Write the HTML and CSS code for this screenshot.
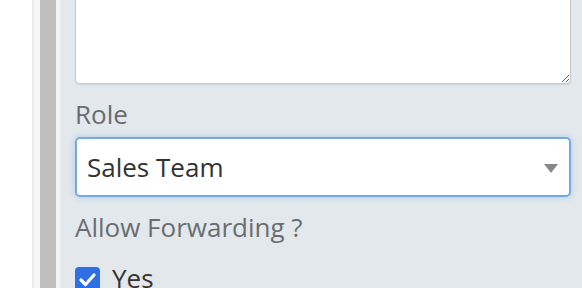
FILE: index.html
```html
<!DOCTYPE html>
<html>
<head>
<meta charset="utf-8">
<link rel="stylesheet" href="styles.css">
</head>
<body>
<div class="page">
  <div class="gutter"></div>
  <div class="rail">
    <div class="rail-edge"></div>
    <div class="rail-light"></div>
    <div class="rail-bar"></div>
    <div class="rail-light2"></div>
    <div class="rail-edge2"></div>
  </div>
  <div class="panel">
    <textarea class="notes"></textarea>
    <label class="label role-label">Role</label>
    <div class="select">
      <span class="select-text">Sales Team</span>
      <span class="caret"></span>
    </div>
    <div class="label fwd-label">Allow Forwarding ?</div>
    <div class="check-row">
      <span class="checkbox">
        <svg width="25" height="25" viewBox="0 0 25 25"><path d="M6 13 L10.5 17.5 L19 8" fill="none" stroke="#fff" stroke-width="3.2" stroke-linecap="round" stroke-linejoin="round"/></svg>
      </span>
      <span class="check-text">Yes</span>
    </div>
  </div>
</div>
</body>
</html>
```

FILE: styles.css
```css
html, body {
  margin: 0;
  padding: 0;
  height: 100%;
  overflow: hidden;
  background: #ffffff;
  font-family: "Open Sans", "Liberation Sans", sans-serif;
}
.page {
  display: flex;
  height: 288px;
}
.gutter {
  width: 32px;
  background: #ffffff;
}
.rail {
  display: flex;
}
.rail-edge { width: 2px; background: #ececec; }
.rail-light { width: 6px; background: #f7f7f7; }
.rail-bar { width: 16px; background: #bfbfbf; }
.rail-light2 { width: 4px; background: #f4f4f4; }
.rail-edge2 { width: 2px; background: #ebebeb; }
.panel {
  flex: 1;
  background: #e3e8ec;
  padding: 0 11px 0 13px;
  display: flex;
  flex-direction: column;
}
.panel > * {
  flex-shrink: 0;
}
.notes {
  display: block;
  box-sizing: border-box;
  margin: -20px 0 0 0;
  height: 104px;
  width: 100%;
  border: 1px solid #c6c8ca;
  border-radius: 4px;
  background: #fff;
  box-shadow: 0 1px 1px rgba(0,0,0,0.08);
  resize: vertical;
  font: inherit;
}
.label {
  display: block;
  color: #6a6d70;
  font-size: 26px;
  line-height: 30px;
}
.role-label {
  margin-top: 15px;
}
.select {
  margin-top: 8px;
  box-sizing: border-box;
  height: 60px;
  border: 2px solid #74a9e6;
  border-radius: 5px;
  background: #fff;
  box-shadow: 0 0 6px rgba(102,160,230,0.45);
  display: flex;
  align-items: center;
  padding: 0 11px 0 10px;
}
.select-text {
  flex: 1;
  font-size: 26px;
  color: #333;
}
.caret {
  width: 0;
  height: 0;
  margin-top: 3px;
  border-left: 7.5px solid transparent;
  border-right: 7.5px solid transparent;
  border-top: 9px solid #888;
}
.fwd-label {
  margin-top: 15px;
}
.check-row {
  margin-top: 21px;
  display: flex;
  align-items: flex-start;
  gap: 12px;
}
.checkbox {
  width: 25px;
  height: 25px;
  margin-top: 4px;
  border-radius: 4px;
  background: #2f6fe6;
  display: block;
}
.checkbox svg { display: block; }
.check-text {
  font-size: 26px;
  line-height: 30px;
  color: #333;
}
```
